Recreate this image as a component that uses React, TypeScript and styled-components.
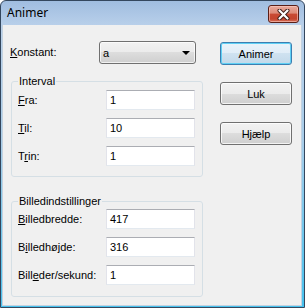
import React from 'react';
import styled, { createGlobalStyle } from 'styled-components';

const GlobalStyle = createGlobalStyle`
  html, body {
    margin: 0;
    padding: 0;
    background: #ffffff;
  }
  * {
    box-sizing: border-box;
  }
`;

const Window = styled.div`
  width: 305px;
  height: 308px;
  display: flex;
  flex-direction: column;
  border: 1px solid #34475e;
  border-radius: 6px 6px 0 0;
  background: linear-gradient(
    to bottom,
    #a0bde0 0px,
    #b9d0ea 25px,
    #a8cde9 140px,
    #45c1ee 100%
  );
  padding: 0 2px 1px 1px;
  overflow: hidden;
`;

const TitleBar = styled.div`
  height: 24px;
  display: flex;
  align-items: flex-start;
  padding-left: 5px;
`;

const TitleText = styled.span`
  margin-top: 4px;
  font-family: 'Noto Sans', 'Open Sans', sans-serif;
  font-size: 12px;
  line-height: 16px;
  color: #000;
`;

const CloseButton = styled.div`
  margin-left: auto;
  margin-right: 3px;
  margin-top: 4px;
  width: 31px;
  height: 18px;
  border: 1px solid #5a1f17;
  border-radius: 3px;
  background: linear-gradient(
    to bottom,
    #e9a99b 0%,
    #dd8b78 45%,
    #c94b34 50%,
    #c4452e 80%,
    #d6705a 100%
  );
  box-shadow: inset 0 0 0 1px rgba(255, 210, 200, 0.55);
  display: flex;
  align-items: center;
  justify-content: center;
`;

const Client = styled.div`
  flex: 1;
  background: #f0f0f0;
  border: 1px solid #c3d2e0;
  border-top: none;
  display: flex;
  padding: 16px 0 0 7px;
  font-family: 'Liberation Sans', Arial, sans-serif;
  font-size: 11px;
  color: #000;
`;

const LeftColumn = styled.div`
  width: 193px;
  display: flex;
  flex-direction: column;
`;

const ButtonColumn = styled.div`
  margin-left: 17px;
  margin-top: 1px;
  display: flex;
  flex-direction: column;
  gap: 17px;
`;

const KonstantRow = styled.div`
  height: 23px;
  display: flex;
  align-items: center;
`;

const RowLabel = styled.span<{ width: number }>`
  width: ${(p) => p.width}px;
  line-height: 13px;
  white-space: nowrap;
`;

const Key = styled.span`
  text-decoration: underline;
`;

const Combo = styled.div`
  width: 97px;
  height: 23px;
  border: 1px solid #707070;
  border-radius: 3px;
  background: linear-gradient(
    to bottom,
    #f2f2f2 0%,
    #ebebeb 50%,
    #dddddd 50%,
    #cfcfcf 100%
  );
  box-shadow: inset 0 0 0 1px rgba(255, 255, 255, 0.7);
  display: flex;
  align-items: center;
  padding: 0 5px 0 3px;
`;

const ComboText = styled.span`
  flex: 1;
`;

const ComboArrow = styled.span`
  width: 0;
  height: 0;
  border-left: 4px solid transparent;
  border-right: 4px solid transparent;
  border-top: 4px solid #000;
`;

const Group = styled.fieldset<{ top: number; bottom: number; after: number }>`
  margin: ${(p) => p.top}px 0 0 1px;
  width: 192px;
  padding: ${(p) => p.after}px 7px ${(p) => p.bottom}px 6px;
  border: 1px solid #d5dfe5;
  border-radius: 3px;
  display: flex;
  flex-direction: column;
  gap: 8px;
  min-width: 0;
`;

const Legend = styled.legend`
  padding: 0 1px;
  line-height: 13px;
  font-size: 11px;
`;

const FieldRow = styled.div`
  height: 20px;
  display: flex;
  align-items: center;
`;

const TextBox = styled.div`
  width: 89px;
  height: 20px;
  background: #fff;
  border: 1px solid #e2e3ea;
  border-top-color: #abadb3;
  border-bottom-color: #e3e9ef;
  display: flex;
  align-items: center;
  padding: 0 3px;
`;

const Button = styled.div<{ primary?: boolean }>`
  width: 72px;
  height: 23px;
  border: 1px solid ${(p) => (p.primary ? '#3c7fb1' : '#707070')};
  border-radius: 3px;
  background: ${(p) =>
    p.primary
      ? 'linear-gradient(to bottom, #eaf3fa 0%, #e0edf7 50%, #cfe2f0 50%, #c2d9ea 100%)'
      : 'linear-gradient(to bottom, #f2f2f2 0%, #ebebeb 50%, #dddddd 50%, #cfcfcf 100%)'};
  box-shadow: ${(p) =>
    p.primary
      ? 'inset 0 0 0 1px #5fd0f5'
      : 'inset 0 0 0 1px rgba(255, 255, 255, 0.75)'};
  display: flex;
  align-items: center;
  justify-content: center;
`;

type Field = { label: React.ReactNode; value: string };

const intervalFields: Field[] = [
  { label: <><Key>F</Key>ra:</>, value: '1' },
  { label: <><Key>T</Key>il:</>, value: '10' },
  { label: <>T<Key>r</Key>in:</>, value: '1' },
];

const imageFields: Field[] = [
  { label: <><Key>B</Key>illedbredde:</>, value: '417' },
  { label: <>B<Key>i</Key>lledhøjde:</>, value: '316' },
  { label: <>Bill<Key>e</Key>der/sekund:</>, value: '1' },
];

function Fields({ fields }: { fields: Field[] }) {
  return (
    <>
      {fields.map((f, i) => (
        <FieldRow key={i}>
          <RowLabel width={88}>{f.label}</RowLabel>
          <TextBox>{f.value}</TextBox>
        </FieldRow>
      ))}
    </>
  );
}

export default function App() {
  return (
    <>
      <GlobalStyle />
      <Window>
        <TitleBar>
          <TitleText>Animer</TitleText>
          <CloseButton>
            <svg width="13" height="11" viewBox="0 0 13 11">
              <path
                d="M2.5 1.5 L10.5 9.5 M10.5 1.5 L2.5 9.5"
                stroke="#3b1a14"
                strokeWidth="4"
                strokeLinecap="round"
              />
              <path
                d="M2.5 1.5 L10.5 9.5 M10.5 1.5 L2.5 9.5"
                stroke="#ffffff"
                strokeWidth="2.2"
                strokeLinecap="round"
              />
            </svg>
          </CloseButton>
        </TitleBar>
        <Client>
          <LeftColumn>
            <KonstantRow>
              <RowLabel width={89}>
                <Key>K</Key>onstant:
              </RowLabel>
              <Combo>
                <ComboText>a</ComboText>
                <ComboArrow />
              </Combo>
            </KonstantRow>
            <Group top={11} bottom={10} after={2}>
              <Legend>Interval</Legend>
              <Fields fields={intervalFields} />
            </Group>
            <Group top={18} bottom={11} after={1}>
              <Legend>Billedindstillinger</Legend>
              <Fields fields={imageFields} />
            </Group>
          </LeftColumn>
          <ButtonColumn>
            <Button primary>Animer</Button>
            <Button>Luk</Button>
            <Button>Hjælp</Button>
          </ButtonColumn>
        </Client>
      </Window>
    </>
  );
}
